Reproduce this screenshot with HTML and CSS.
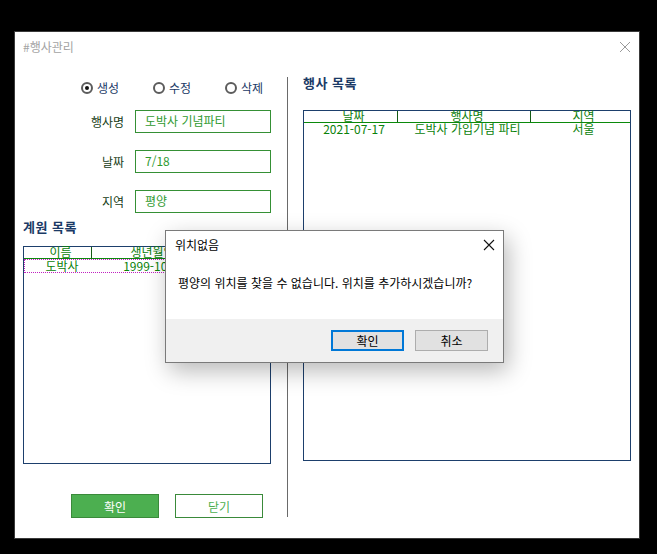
FILE: index.html
```html
<!DOCTYPE html>
<html lang="ko">
<head>
    <meta charset="UTF-8">
    <meta name="viewport" content="width=device-width, initial-scale=1.0">
    <title>#행사관리</title>
    <link rel="stylesheet" href="styles.css">
</head>
<body>
    <div class="window">
        <div class="titlebar">
            <span class="title">#행사관리</span>
            <svg class="title-close" width="12" height="12" viewBox="0 0 12 12">
                <path d="M1 1 L11 11 M11 1 L1 11" stroke="#9a9a9a" stroke-width="1" fill="none"/>
            </svg>
        </div>

        <div class="content">
            <div class="left">
                <div class="radios">
                    <label class="radio checked"><span class="dot"></span>생성</label>
                    <label class="radio"><span class="dot"></span>수정</label>
                    <label class="radio"><span class="dot"></span>삭제</label>
                </div>

                <div class="field">
                    <span class="field-label">행사명</span>
                    <div class="textbox">도박사 기념파티</div>
                </div>
                <div class="field">
                    <span class="field-label">날짜</span>
                    <div class="textbox">7/18</div>
                </div>
                <div class="field">
                    <span class="field-label">지역</span>
                    <div class="textbox">평양</div>
                </div>

                <h2 class="section member-title">계원 목록</h2>
                <div class="listbox member-list">
                    <div class="list-head">
                        <div class="cell c-name">이름</div>
                        <div class="cell c-birth">생년월일</div>
                    </div>
                    <div class="list-row focused">
                        <div class="cell c-name">도박사</div>
                        <div class="cell c-birth">1999-10-10</div>
                    </div>
                </div>

                <div class="actions">
                    <button class="btn primary">확인</button>
                    <button class="btn">닫기</button>
                </div>
            </div>

            <div class="divider"></div>

            <div class="right">
                <h2 class="section event-title">행사 목록</h2>
                <div class="listbox event-list">
                    <div class="list-head">
                        <div class="cell c-date">날짜</div>
                        <div class="cell c-event">행사명</div>
                        <div class="cell c-place">지역</div>
                    </div>
                    <div class="list-row">
                        <div class="cell c-date">2021-07-17</div>
                        <div class="cell c-event">도박사 가입기념 파티</div>
                        <div class="cell c-place">서울</div>
                    </div>
                </div>
            </div>
        </div>
    </div>

    <div class="dialog">
        <div class="dialog-title">
            <span>위치없음</span>
            <svg class="dialog-close" width="12" height="12" viewBox="0 0 12 12">
                <path d="M1 1 L11 11 M11 1 L1 11" stroke="#111" stroke-width="1.1" fill="none"/>
            </svg>
        </div>
        <p class="dialog-msg">평양의 위치를 찾을 수 없습니다. 위치를 추가하시겠습니까?</p>
        <div class="dialog-footer">
            <button class="dbtn default">확인</button>
            <button class="dbtn">취소</button>
        </div>
    </div>
</body>
</html>
```

FILE: styles.css
```css
* {
    box-sizing: border-box;
}

body {
    margin: 0;
    background: #000;
    font-family: "Noto Sans CJK KR", "Noto Sans", sans-serif;
    font-size: 12px;
    color: #000;
}

.window {
    margin: 31px 0 0 14px;
    width: 626px;
    height: 508px;
    background: #fff;
    border: 1px solid #3a3a3a;
}

.titlebar {
    height: 29px;
    display: flex;
    align-items: center;
    justify-content: space-between;
    padding: 0 8px 0 8px;
}

.title {
    color: #a3a3a3;
    line-height: 14px;
}

.title-close {
    display: block;
}

.content {
    display: flex;
    padding-left: 8px;
}

.left {
    width: 248px;
    flex-shrink: 0;
}

.right {
    width: 328px;
    margin-left: 15px;
    flex-shrink: 0;
}

.divider {
    width: 1px;
    height: 440px;
    margin: 16px 0 0 16px;
    background: #6a6a6a;
    flex-shrink: 0;
}

/* radios */
.radios {
    display: flex;
    margin: 20px 0 0 58px;
    height: 13px;
}

.radio {
    width: 72px;
    flex-shrink: 0;
    display: flex;
    align-items: center;
    color: #1b3a66;
    line-height: 13px;
}

.radio .dot {
    width: 12px;
    height: 12px;
    border: 2px solid #5c5c5c;
    border-radius: 50%;
    margin-right: 4px;
    position: relative;
    flex-shrink: 0;
}

.radio.checked .dot::after {
    content: "";
    position: absolute;
    left: 2px;
    top: 2px;
    width: 4px;
    height: 4px;
    border-radius: 50%;
    background: #111;
}

/* form fields */
.field {
    display: flex;
    align-items: center;
    margin-top: 17px;
}

.radios + .field {
    margin-top: 16px;
}

.field-label {
    width: 101px;
    margin-right: 11px;
    text-align: right;
    color: #163c16;
}

.textbox {
    width: 136px;
    height: 23px;
    border: 1px solid #359035;
    color: #2f9a2f;
    padding: 0 0 1px 9px;
    line-height: 20px;
}

.section {
    margin: 0;
    font-size: 13px;
    font-weight: bold;
    line-height: 14px;
    color: #1b3a66;
    letter-spacing: 0.5px;
}

.member-title {
    margin-top: 7px;
}

.event-title {
    margin-top: 15px;
}

/* list views */
.listbox {
    border: 1px solid #1d3f6c;
    background: #fff;
}

.member-list {
    margin-top: 12px;
    height: 218px;
}

.event-list {
    margin-top: 20px;
    height: 351px;
}

.list-head {
    display: flex;
    height: 12px;
    border-bottom: 1px solid #0b8a0b;
    color: #0a7d0a;
    line-height: 10px;
}

.list-head .cell {
    border-right: 1px solid #145a14;
}

.list-row {
    display: flex;
    height: 12px;
    color: #0a820a;
    line-height: 12px;
}

.list-row.focused {
    border: 1px dotted #c022c0;
    height: 14px;
}

.cell {
    text-align: center;
    padding-left: 6px;
    white-space: nowrap;
    font-size: 12px;
}

.member-list .c-name {
    width: 68px;
}

.member-list .c-birth {
    width: 116px;
}

.event-list .c-date {
    width: 94px;
}

.event-list .c-event {
    width: 133px;
}

.event-list .c-place {
    flex: 1;
    border-right: none;
}

/* bottom buttons */
.actions {
    display: flex;
    gap: 16px;
    margin: 30px 0 0 48px;
}

.btn {
    width: 88px;
    height: 24px;
    border: 1px solid #3a8a3a;
    background: #fff;
    color: #4caf50;
    font-family: inherit;
    font-size: 12px;
    padding: 0;
}

.btn.primary {
    background: #4caf50;
    color: #fff;
}

/* message box */
.dialog {
    position: absolute;
    left: 165px;
    top: 230px;
    width: 339px;
    height: 133px;
    background: #fff;
    border: 1px solid #7a7a7a;
    box-shadow: 4px 8px 22px rgba(0, 0, 0, 0.28);
    display: flex;
    flex-direction: column;
}

.dialog-title {
    display: flex;
    justify-content: space-between;
    align-items: center;
    height: 28px;
    padding: 0 8px 0 9px;
    line-height: 14px;
}

.dialog-close {
    display: block;
}

.dialog-msg {
    margin: 0;
    flex: 1;
    padding: 17px 0 0 12px;
    line-height: 14px;
}

.dialog-footer {
    height: 43px;
    background: #f0f0f0;
    display: flex;
    justify-content: flex-end;
    align-items: center;
    gap: 11px;
    padding-right: 15px;
}

.dbtn {
    width: 73px;
    height: 21px;
    border: 1px solid #adadad;
    background: #e1e1e1;
    font-family: inherit;
    font-size: 12px;
    color: #000;
    padding: 0;
}

.dbtn.default {
    border: 2px solid #0078d7;
}
```
